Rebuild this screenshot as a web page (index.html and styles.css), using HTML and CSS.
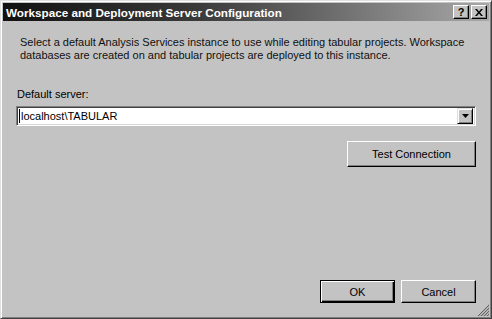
FILE: index.html
```html
<!DOCTYPE html>
<html>
<head>
<meta charset="utf-8">
<link rel="stylesheet" href="styles.css">
</head>
<body>
<div class="window">
  <div class="titlebar">
    <span class="title">Workspace and Deployment Server Configuration</span>
    <div class="caption-buttons">
      <div class="cap-btn help">?</div>
      <div class="cap-btn close">
        <svg width="8" height="7" viewBox="0 0 8 7"><path d="M0 0h2l2 2.5L6 0h2L5 3.5 8 7H6L4 4.5 2 7H0l3-3.5z" fill="#000"/></svg>
      </div>
    </div>
  </div>
  <div class="content">
    <p class="desc">Select a default Analysis Services instance to use while editing tabular projects. Workspace databases are created on and tabular projects are deployed to this instance.</p>
    <div class="label">Default server:</div>
    <div class="combo">
      <div class="combo-text">localhost\TABULAR</div>
      <div class="combo-btn">
        <svg width="7" height="4" viewBox="0 0 7 4"><path d="M0 0h7L3.5 4z" fill="#000"/></svg>
      </div>
    </div>
    <div class="test-row">
      <div class="btn test">Test Connection</div>
    </div>
    <div class="spacer"></div>
    <div class="footer">
      <div class="btn default">OK</div>
      <div class="btn">Cancel</div>
    </div>
  </div>
  <div class="grip">
    <svg width="12" height="12" viewBox="0 0 12 12">
      <path d="M11 1L1 11M11 4L4 11M11 7L7 11M11 10L10 11" stroke="#fff" stroke-width="1"/>
      <path d="M12 1L1 12M12 4L4 12M12 7L7 12M12 10L10 12" stroke="#666" stroke-width="1.2"/>
    </svg>
  </div>
</div>
</body>
</html>
```
FILE: styles.css
```css
* { box-sizing: border-box; }
html, body { margin: 0; padding: 0; }
body {
  width: 492px;
  height: 319px;
  overflow: hidden;
  font-family: "Liberation Sans", Arial, sans-serif;
  font-size: 11px;
  color: #000;
  background: #c3c3c3;
}
.window {
  position: relative;
  width: 492px;
  height: 319px;
  background: #c3c3c3;
  border-top: 1px solid #e0e0e0;
  border-left: 1px solid #e0e0e0;
  border-right: 1px solid #404040;
  border-bottom: 1px solid #404040;
  box-shadow: inset 1px 1px 0 #fff, inset -1px -1px 0 #808080;
  padding: 2px;
  display: flex;
  flex-direction: column;
}
.titlebar {
  height: 18px;
  background: linear-gradient(to right, #111 0%, #3a3a3a 40%, #a8a8a8 100%);
  display: flex;
  align-items: center;
  justify-content: space-between;
  padding: 0 2px 0 3px;
}
.title {
  color: #fff;
  font-family: "Liberation Sans", Arial, sans-serif;
  font-weight: bold;
  font-size: 11.7px;
}
.caption-buttons { display: flex; gap: 2px; }
.cap-btn {
  width: 16px;
  height: 14px;
  background: #c3c3c3;
  border-top: 1px solid #fff;
  border-left: 1px solid #fff;
  border-right: 1px solid #000;
  border-bottom: 1px solid #000;
  box-shadow: inset -1px -1px 0 #808080;
  display: flex;
  align-items: center;
  justify-content: center;
  font-family: "Liberation Sans", Arial, sans-serif;
  font-weight: bold;
  font-size: 11px;
  line-height: 1;
}
.content {
  flex: 1;
  display: flex;
  flex-direction: column;
  padding: 15px 13px 13px 13px;
}
.desc {
  margin: 0 0 0 4px;
  font-size: 11px;
  line-height: 13px;
  color: #111;
}
.label {
  margin-top: 26px;
  margin-left: 1px;
  font-size: 11px;
  line-height: 13px;
}
.combo {
  margin-top: 5px;
  height: 20px;
  background: #fff;
  border-top: 1px solid #808080;
  border-left: 1px solid #808080;
  border-right: 1px solid #fff;
  border-bottom: 1px solid #fff;
  box-shadow: inset 1px 1px 0 #404040, inset -1px -1px 0 #d8d8d8;
  display: flex;
  align-items: center;
  justify-content: space-between;
  padding: 2px;
}
.combo-text {
  font-size: 11px;
  padding-left: 1px;
  border-left: 1px solid #000;
  line-height: 14px;
}
.combo-btn {
  width: 16px;
  height: 16px;
  background: #c3c3c3;
  border-top: 1px solid #e0e0e0;
  border-left: 1px solid #e0e0e0;
  border-right: 1px solid #000;
  border-bottom: 1px solid #000;
  box-shadow: inset 1px 1px 0 #fff, inset -1px -1px 0 #808080;
  display: flex;
  align-items: center;
  justify-content: center;
}
.test-row {
  display: flex;
  justify-content: flex-end;
  margin-top: 15px;
}
.btn {
  width: 75px;
  height: 23px;
  background: #c3c3c3;
  border-top: 1px solid #fff;
  border-left: 1px solid #fff;
  border-right: 1px solid #000;
  border-bottom: 1px solid #000;
  box-shadow: inset -1px -1px 0 #808080;
  display: flex;
  align-items: center;
  justify-content: center;
  font-size: 11px;
}
.btn.test { width: 129px; height: 26px; }
.btn.default {
  border: 1px solid #000;
  box-shadow: inset 1px 1px 0 #fff, inset -1px -1px 0 #000, inset -2px -2px 0 #808080;
}
.spacer { flex: 1; }
.footer {
  display: flex;
  justify-content: flex-end;
  gap: 6px;
}
.grip {
  position: absolute;
  right: 2px;
  bottom: 2px;
  width: 12px;
  height: 12px;
}
```
